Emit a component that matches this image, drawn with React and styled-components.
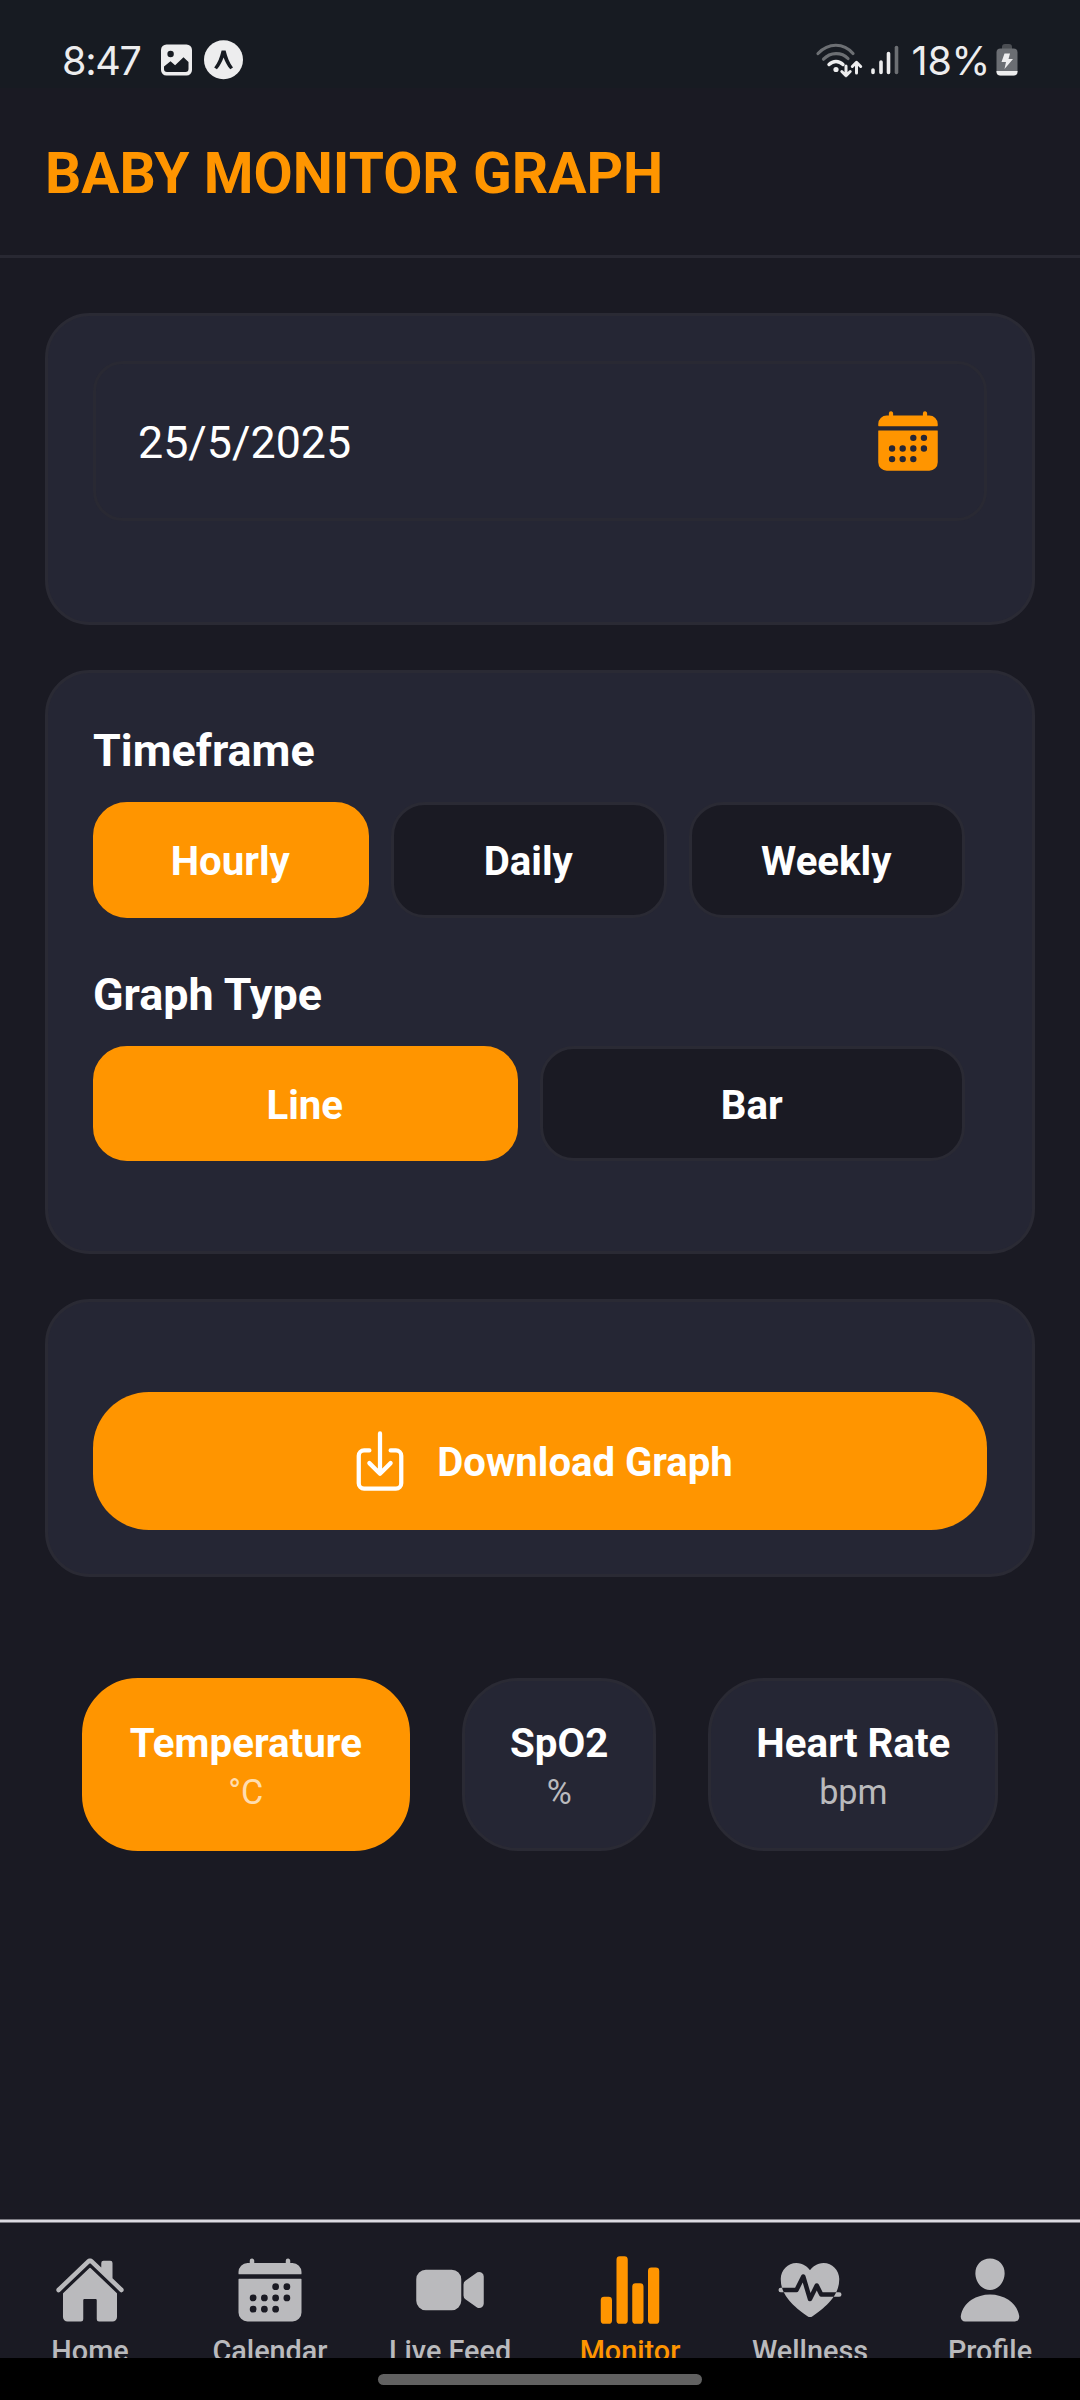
import React from "react";
import styled, { createGlobalStyle } from "styled-components";
import {
  IoCalendar,
  IoDownloadOutline,
  IoFitness,
  IoHome,
  IoPerson,
  IoStatsChart,
  IoVideocam,
} from "react-icons/io5";

const c = {
  bg: "#1a1a23",
  status: "#171b22",
  card: "#252634",
  border: "#2a2a34",
  accent: "#ff9500",
  white: "#ffffff",
  muted: "#bababd",
  statusInk: "#ededee",
};

const GlobalStyle = createGlobalStyle`
  *, *::before, *::after { box-sizing: border-box; }
  body { margin: 0; background: ${c.bg}; }
  button { font: inherit; color: inherit; padding: 0; border: 0; background: none; }
`;

const Screen = styled.div`
  width: 1080px;
  height: 2400px;
  display: flex;
  flex-direction: column;
  overflow: hidden;
  background: ${c.bg};
  color: ${c.white};
  font-family: Roboto, "Liberation Sans", sans-serif;
`;

const StatusBar = styled.div`
  flex: none;
  height: 88px;
  padding: 33px 62px 0 62px;
  display: flex;
  justify-content: space-between;
  background: ${c.status};
  color: ${c.statusInk};
`;

const StatusGroup = styled.div`
  display: flex;
  align-items: center;
  height: 56px;
`;

const StatusText = styled.span`
  font-family: Inter, "Noto Sans", sans-serif;
  font-size: 39.5px;
  line-height: 56px;
  letter-spacing: ${(p) => p.$spacing || 0}px;
`;

const StatusIcons = styled.svg`
  display: block;
  flex: none;
  margin-top: -2px;
  margin-left: ${(p) => p.$left || 0}px;
  margin-right: ${(p) => p.$right || 0}px;
`;

const Header = styled.header`
  flex: none;
  height: 170px;
  padding: 53px 45px 0;
  border-bottom: 3px solid #282832;
`;

const Title = styled.h1`
  margin: 0;
  font-size: 56.9px;
  line-height: 66px;
  font-weight: 700;
  color: ${c.accent};
  white-space: nowrap;
`;

const Content = styled.main`
  flex: 1;
  min-height: 0;
  padding: 55px 45px 0;
  display: flex;
  flex-direction: column;
`;

const Card = styled.section`
  flex: none;
  height: ${(p) => p.$height}px;
  margin-bottom: 45px;
  padding: ${(p) => p.$top || 45}px 45px 0;
  border: 3px solid ${c.border};
  border-radius: 45px;
  background: ${c.card};
`;

const DateField = styled.button`
  width: 100%;
  height: 160px;
  padding: 0 42px;
  display: flex;
  align-items: center;
  justify-content: space-between;
  border: 3px solid #292933;
  border-radius: 30px;
  color: ${c.white};
`;

const DateValue = styled.span`
  padding-top: 4px;
  font-size: 44.8px;
  line-height: 54px;
`;

const CalendarIcon = styled(IoCalendar)`
  width: 68px;
  height: 68px;
  color: ${c.accent};
`;

const SectionLabel = styled.h2`
  margin: 0 0 19px;
  font-size: 44.9px;
  line-height: 65px;
  font-weight: 700;
`;

const Segments = styled.div`
  display: flex;
  height: ${(p) => p.$height}px;
  margin-bottom: 44px;
  padding-right: 22.5px;
  gap: 22.5px;
`;

const Segment = styled.button`
  flex: 1 1 0;
  padding: 4px 1px 0 0;
  border: 3px solid ${(p) => (p.$active ? c.accent : c.border)};
  border-radius: 34px;
  background: ${(p) => (p.$active ? c.accent : c.bg)};
  color: ${c.white};
  font-size: 40.2px;
  line-height: 48px;
  font-weight: 700;
`;

const DownloadButton = styled.button`
  width: 100%;
  height: 138px;
  display: flex;
  align-items: center;
  justify-content: center;
  gap: 23px;
  padding-right: 1px;
  border-radius: 56px;
  background: ${c.accent};
  color: ${c.white};
`;

const DownloadLabel = styled.span`
  padding-top: 3px;
  font-size: 40.1px;
  line-height: 48px;
  font-weight: 700;
`;

const DownloadIcon = styled(IoDownloadOutline)`
  width: 68px;
  height: 68px;
`;

const Metrics = styled.div`
  display: flex;
  justify-content: center;
  gap: 52px;
  margin-top: 56px;
`;

const Metric = styled.button`
  height: 173px;
  padding: 4px 45px 0;
  display: flex;
  flex-direction: column;
  align-items: center;
  justify-content: center;
  border: 3px solid ${(p) => (p.$active ? c.accent : c.border)};
  border-radius: 56px;
  background: ${(p) => (p.$active ? c.accent : c.card)};
`;

const MetricName = styled.span`
  font-size: 40.3px;
  line-height: 50px;
  font-weight: 700;
  color: ${c.white};
`;

const MetricUnit = styled.span`
  font-size: 34.2px;
  line-height: 46px;
  color: ${(p) => (p.$active ? "rgba(255,255,255,0.7)" : c.muted)};
`;

const TabBar = styled.nav`
  flex: none;
  height: 139px;
  padding-top: 4px;
  display: grid;
  grid-template-columns: repeat(6, 1fr);
  overflow: hidden;
  background: linear-gradient(
    #7c7b82 0 1px,
    #dcdbe1 1px 3px,
    #7c7b82 3px 4px,
    ${c.bg} 4px
  );
`;

const Tab = styled.button`
  height: 160px;
  padding-top: 31px;
  display: flex;
  flex-direction: column;
  align-items: center;
  color: ${(p) => (p.$active ? c.accent : c.muted)};

  svg {
    flex: none;
    width: 72px;
    height: 72px;
    margin-right: 1px;
  }
`;

const TabLabel = styled.span`
  margin-top: 8px;
  font-size: 28.8px;
  line-height: 34px;
  font-weight: 500;
  white-space: nowrap;
`;

const GestureBar = styled.div`
  flex: none;
  height: 42px;
  padding-top: 16px;
  background: #000;
`;

const Handle = styled.div`
  width: 324px;
  height: 11px;
  margin: 0 auto;
  border-radius: 6px;
  background: #616161;
`;

function NotificationIcons() {
  return (
    <StatusIcons $left={19} width="84" height="40" viewBox="0 0 84 40">
      <rect x="1" y="4.5" width="31" height="31" rx="5.5" fill={c.statusInk} />
      <circle cx="10.6" cy="14" r="3.2" fill={c.status} />
      <path d="M4 26.5l6.5-5.2 4.6 4 8.4-8 5 4.6V29a3 3 0 0 1-3 3H7a3 3 0 0 1-3-3z" fill={c.status} />
      <circle cx="63.5" cy="19.8" r="19.5" fill={c.statusInk} />
      <path d="M54.2 27.4C58 23 60 17 61.600 10.500h4C67.300 17 69.300 23 73 27.400L70.300 29.200C67.300 26 65.300 22 63.600 17.500 61.900 22 59.900 26 56.900 29.200z" fill={c.status} />
    </StatusIcons>
  );
}

function SignalIcons() {
  return (
    <StatusIcons $right={13} width="84" height="36" viewBox="0 0 84 36" fill="none" strokeLinecap="round" strokeLinejoin="round">
      <path d="M3 11.500C13.500 0.500 28.500 0.500 38 11.500" stroke="#6c6f73" strokeWidth="3.2" />
      <path d="M8.500 17.200C15.500 9.800 26.500 9.800 33 16.500" stroke="#6c6f73" strokeWidth="3.2" />
      <path d="M14 22.500c4-4 10-4 14 0" stroke={c.statusInk} strokeWidth="3.4" />
      <circle cx="21" cy="27.5" r="2.6" fill={c.statusInk} />
      <path d="M31 24v9.500M26.800 29.500l4.200 4.200 4.200-4.200M41.500 31v-10.500M37.300 24.500l4.200-4.200 4.200 4.200" stroke={c.statusInk} strokeWidth="3" />
      <path d="M58 28v2.500M66 20v10.500M73.500 11.500v19" stroke={c.statusInk} strokeWidth="3.6" />
      <path d="M81.500 5.500v25" stroke="#6c6f73" strokeWidth="3.6" />
    </StatusIcons>
  );
}

function BatteryIcon() {
  return (
    <StatusIcons $left={6} width="22" height="32" viewBox="0 0 22 32">
      <path d="M6 5V3a3 3 0 0 1 3-3h4a3 3 0 0 1 3 3v2z" fill="#4b4e53" />
      <rect x="0.5" y="4.5" width="21" height="27" rx="4" fill="#6b6e73" />
      <path d="M0.500 27h21v0.500a4 4 0 0 1-4 4h-13a4 4 0 0 1-4-4z" fill={c.statusInk} />
      <path d="M8.500 9.500h5.500l-1.500 5.500h4.500L8.500 25l1.500-7H5.500z" fill={c.statusInk} />
    </StatusIcons>
  );
}

const timeframes = ["Hourly", "Daily", "Weekly"];
const graphTypes = ["Line", "Bar"];
const metrics = [
  { name: "Temperature", unit: "°C" },
  { name: "SpO2", unit: "%" },
  { name: "Heart Rate", unit: "bpm" },
];
const tabs = [
  { label: "Home", Icon: IoHome },
  { label: "Calendar", Icon: IoCalendar },
  { label: "Live Feed", Icon: IoVideocam },
  { label: "Monitor", Icon: IoStatsChart },
  { label: "Wellness", Icon: IoFitness },
  { label: "Profile", Icon: IoPerson },
];

export default function App() {
  return (
    <Screen>
      <GlobalStyle />
      <StatusBar>
        <StatusGroup>
          <StatusText $spacing={-1.3}>8:47</StatusText>
          <NotificationIcons />
        </StatusGroup>
        <StatusGroup>
          <SignalIcons />
          <StatusText $spacing={-0.3}>18%</StatusText>
          <BatteryIcon />
        </StatusGroup>
      </StatusBar>

      <Header>
        <Title>BABY MONITOR GRAPH</Title>
      </Header>

      <Content>
        <Card $height={312}>
          <DateField>
            <DateValue>25/5/2025</DateValue>
            <CalendarIcon />
          </DateField>
        </Card>

        <Card $height={584}>
          <SectionLabel>Timeframe</SectionLabel>
          <Segments $height={116}>
            {timeframes.map((t) => (
              <Segment key={t} $active={t === "Hourly"}>{t}</Segment>
            ))}
          </Segments>
          <SectionLabel>Graph Type</SectionLabel>
          <Segments $height={115}>
            {graphTypes.map((t) => (
              <Segment key={t} $active={t === "Line"}>{t}</Segment>
            ))}
          </Segments>
        </Card>

        <Card $height={278} $top={90}>
          <DownloadButton>
            <DownloadIcon />
            <DownloadLabel>Download Graph</DownloadLabel>
          </DownloadButton>
        </Card>

        <Metrics>
          {metrics.map(({ name, unit }) => (
            <Metric key={name} $active={name === "Temperature"}>
              <MetricName>{name}</MetricName>
              <MetricUnit $active={name === "Temperature"}>{unit}</MetricUnit>
            </Metric>
          ))}
        </Metrics>
      </Content>

      <TabBar>
        {tabs.map(({ label, Icon }) => (
          <Tab key={label} $active={label === "Monitor"}>
            <Icon />
            <TabLabel>{label}</TabLabel>
          </Tab>
        ))}
      </TabBar>
      <GestureBar>
        <Handle />
      </GestureBar>
    </Screen>
  );
}
